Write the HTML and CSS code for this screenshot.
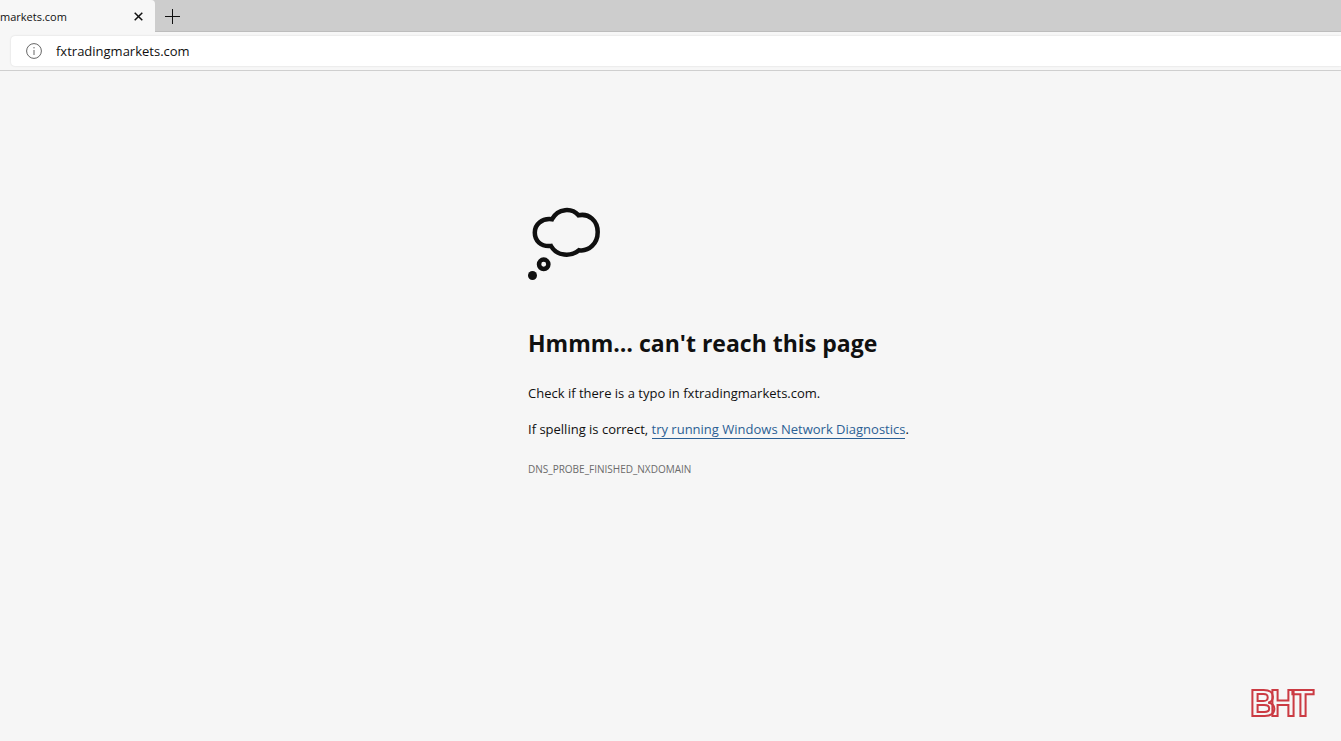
FILE: index.html
```html
<!DOCTYPE html>
<html lang="en">
<head>
    <meta charset="UTF-8">
    <meta name="viewport" content="width=device-width, initial-scale=1.0">
    <title>fxtradingmarkets.com</title>
    <link rel="stylesheet" href="styles.css">
</head>
<body>
    <header class="browser">
        <div class="tab-strip">
            <div class="tab">
                <span class="tab-title">markets.com</span>
                <button class="tab-close" type="button" aria-label="Close tab">
                    <svg width="9" height="9" viewBox="0 0 9 9"><path d="M.7.7l7.6 7.6M8.3.7L.7 8.3"/></svg>
                </button>
            </div>
            <button class="tab-new" type="button" aria-label="New tab">
                <svg width="15" height="15" viewBox="0 0 15 15"><path d="M7.5 0v15M0 7.5h15"/></svg>
            </button>
        </div>
        <div class="toolbar">
            <div class="address-bar">
                <svg class="info-icon" width="16" height="16" viewBox="0 0 16 16">
                    <circle cx="8" cy="8" r="7.4"/>
                    <path d="M8 7v5M8 4v1.4"/>
                </svg>
                <input class="address" type="text" aria-label="Address" value="fxtradingmarkets.com">
            </div>
        </div>
    </header>

    <main class="error-page">
        <svg class="cloud" width="74" height="74" viewBox="0 0 74 74">
            <path d="M24 12.300C30 .8 44 .8 50.500 8.300C61 6 69.700 14 69.700 25C69.700 36.500 61 44.700 51 43.200C43 50 29 49.500 23 39C12.500 40 6.800 33.500 6.800 25.500C6.800 17.500 13.500 11 24 12.300Z"/>
            <circle cx="15.700" cy="57.300" r="4.700"/>
            <circle class="dot" cx="4.500" cy="68.500" r="4.500"/>
        </svg>
        <h1>Hmmm… can't reach this page</h1>
        <p>Check if there is a typo in fxtradingmarkets.com.</p>
        <p>If spelling is correct, <a href="#">try running Windows Network Diagnostics</a>.</p>
        <div class="error-code">DNS_PROBE_FINISHED_NXDOMAIN</div>
    </main>

    <svg class="logo" width="76" height="48" viewBox="0 0 76 48" role="img" aria-label="BHT">
        <text x="5 25 47" y="38">BHT</text>
    </svg>
</body>
</html>
```

FILE: styles.css
```css
:root {
    --page: #f6f6f6;
    --strip: #cdcdcd;
    --ink: #101010;
    --link: #2b5f94;
    --red: #cb3b43;
}

* {
    box-sizing: border-box;
    margin: 0;
    padding: 0;
}

body {
    background: var(--page);
    font-family: 'Open Sans', 'Noto Sans', sans-serif;
    font-size: 13px;
    color: var(--ink);
    min-height: 100vh;
}

button {
    display: flex;
    align-items: center;
    justify-content: center;
    background: none;
    border: none;
}

svg {
    display: block;
    fill: none;
    stroke: var(--ink);
}

.browser {
    border-bottom: 1px solid #cfcfcf;
}

.tab-strip {
    display: flex;
    height: 32px;
    background: var(--strip);
    box-shadow: inset 0 -1px 0 #bdbdbd;
}

.tab {
    display: flex;
    align-items: center;
    justify-content: space-between;
    width: 155px;
    padding-right: 8px;
    background: #f7f7f7;
    border-radius: 0 4px 0 0;
}

.tab-title {
    font-size: 11px;
}

.tab-close {
    width: 18px;
    height: 18px;
}

.tab-close svg {
    stroke-width: 1.5;
}

.tab-new {
    width: 35px;
    height: 32px;
}

.toolbar {
    padding: 4px 0 4px 11px;
    background: #f7f7f7;
}

.address-bar {
    display: flex;
    align-items: center;
    gap: 14px;
    height: 30px;
    padding-left: 15px;
    background: white;
    border-radius: 4px 0 0 4px;
    box-shadow: 0 0 2px rgba(0, 0, 0, 0.15);
}

.info-icon {
    stroke: #666;
}

.address {
    flex: 1;
    border: none;
    outline: none;
    background: none;
    font: inherit;
    color: inherit;
}

.error-page {
    padding: 136px 0 0 528px;
}

.cloud {
    stroke-width: 4.5;
}

.cloud .dot {
    fill: var(--ink);
    stroke: none;
}

h1 {
    margin: 46px 0 24px;
    font-size: 23px;
    line-height: 32px;
}

p {
    margin-bottom: 16px;
    line-height: 20px;
}

a {
    color: var(--link);
    text-decoration: none;
    border-bottom: 1px solid var(--link);
}

.error-code {
    margin-top: 22px;
    font-size: 10px;
    line-height: 16px;
    color: #6b6b6b;
}

.logo {
    position: fixed;
    right: 20px;
    bottom: 15px;
    stroke: var(--red);
    stroke-width: 2;
    font-family: 'Liberation Sans', Arial, sans-serif;
    font-size: 36px;
    font-weight: bold;
}
```
